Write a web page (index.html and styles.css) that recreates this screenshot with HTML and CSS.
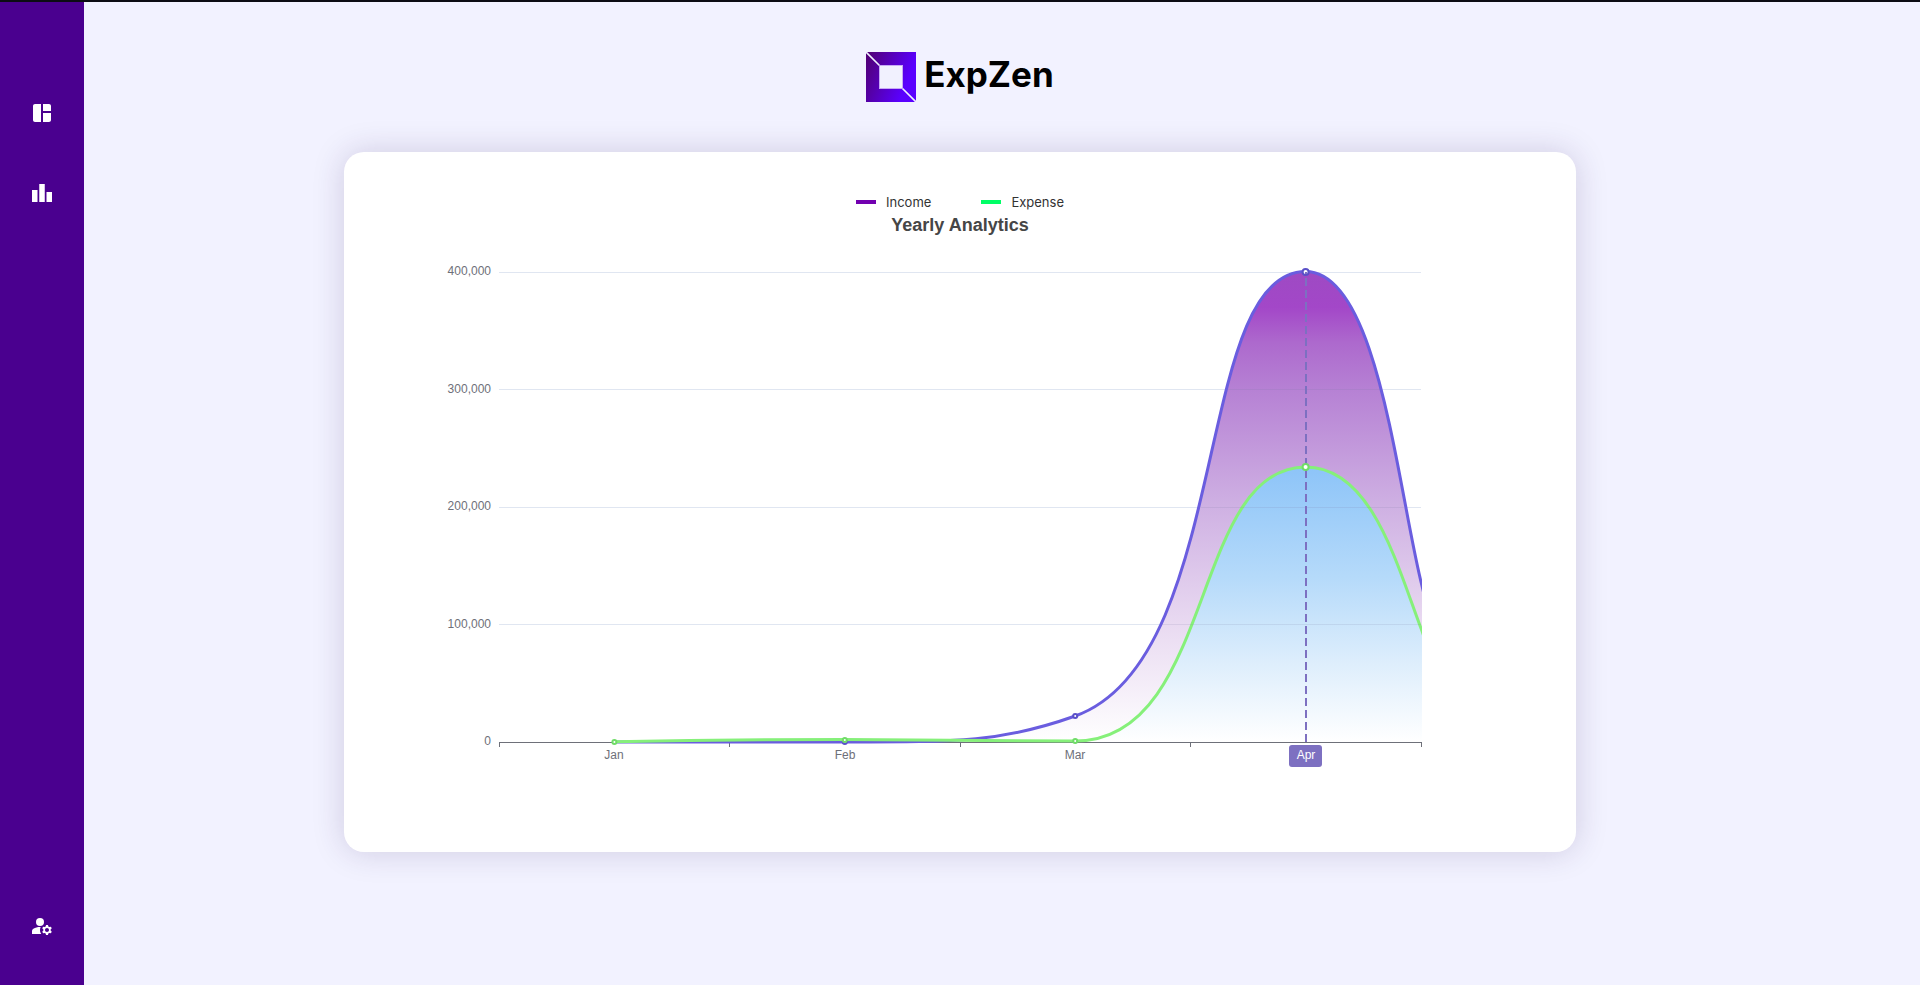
FILE: index.html
```html
<!DOCTYPE html>
<html lang="en">
<head>
<meta charset="utf-8">
<title>ExpZen</title>
<link rel="stylesheet" href="styles.css">
</head>
<body>
<div class="app">
  <nav class="sidebar" aria-label="Main">
    <div class="nav-group">
      <a class="nav-link" href="#dashboard" aria-label="Dashboard"><svg class="icon" viewBox="0 0 24 24"><path d="M11 21H5c-1.1 0-2-.9-2-2V5c0-1.1.9-2 2-2h6v18zm2 0h6c1.1 0 2-.9 2-2v-7h-8v9zm8-11V5c0-1.1-.9-2-2-2h-6v7h8z"/></svg></a>
      <a class="nav-link" href="#analytics" aria-label="Analytics"><svg class="icon" viewBox="0 0 24 24"><path d="M7.5 21H2V9h5.5v12zm7.25-18h-5.5v18h5.5V3zM22 11h-5.5v10H22V11z"/></svg></a>
    </div>
    <a class="nav-link" href="#account" aria-label="Account"><svg class="icon" viewBox="0 0 24 24"><circle cx="10" cy="8" r="4"/><path d="M10.67 13.02c-.22-.01-.44-.02-.67-.02-2.42 0-4.68.67-6.61 1.82-.88.52-1.39 1.5-1.39 2.53V20h9.26c-.79-1.13-1.26-2.51-1.26-4 0-1.07.25-2.07.67-2.98zM20.75 16c0-.22-.03-.42-.06-.63l1.14-1.01-1-1.73-1.45.49c-.32-.27-.68-.48-1.08-.63L18 11h-2l-.3 1.49c-.4.15-.76.36-1.08.63l-1.45-.49-1 1.73 1.14 1.01c-.03.21-.06.41-.06.63s.03.42.06.63l-1.14 1.01 1 1.73 1.45-.49c.32.27.68.48 1.08.63L16 21h2l.3-1.49c.4-.15.76-.36 1.08-.63l1.45.49 1-1.73-1.14-1.01c.03-.21.06-.41.06-.63zM17 18c-1.1 0-2-.9-2-2s.9-2 2-2 2 .9 2 2-.9 2-2 2z"/></svg></a>
  </nav>
  <main class="main">
    <header class="brand">
      <svg class="brand-mark" viewBox="0 0 50 50" aria-hidden="true">
        <defs><linearGradient id="mark" x1="0" y1="0.2" x2="1" y2="0.6"><stop offset="0" stop-color="#52007a"/><stop offset="0.85" stop-color="#5a00ff"/></linearGradient></defs>
        <rect width="50" height="50" fill="url(#mark)"/>
        <path d="M0 0L14 14M36 36L50 50" stroke="#f0f0fe" stroke-width="1.6"/>
        <rect x="13.5" y="13.5" width="23" height="23" fill="#f1f1fe" stroke="#c8aaf5"/>
      </svg>
      <span class="brand-name">ExpZen</span>
    </header>
    <section class="card">
      <div class="legend">
        <span class="legend-item"><i class="swatch swatch-income"></i>Income</span>
        <span class="legend-item"><i class="swatch swatch-expense"></i>Expense</span>
      </div>
      <h1 class="title">Yearly Analytics</h1>
      <svg class="chart" viewBox="384 238 1152 574" role="img" aria-label="Income and expense by month">
        <defs>
          <linearGradient id="income" gradientUnits="userSpaceOnUse" x1="0" y1="272" x2="0" y2="742">
            <stop offset="0" stop-color="#9e4ac3"/><stop offset="0.075" stop-color="#a347c8"/><stop offset="0.15" stop-color="#ad69cd"/><stop offset="0.25" stop-color="#b681d4"/><stop offset="0.5" stop-color="#cfb1e3"/><stop offset="0.75" stop-color="#e9daf1"/><stop offset="1" stop-color="#ffffff"/>
          </linearGradient>
          <linearGradient id="expense" gradientUnits="userSpaceOnUse" x1="0" y1="467" x2="0" y2="742">
            <stop offset="0" stop-color="#8dc4f8"/><stop offset="0.4" stop-color="#b5dafa"/><stop offset="0.7" stop-color="#dcedfc"/><stop offset="1" stop-color="#ffffff"/>
          </linearGradient>
          <clipPath id="plot"><rect x="498" y="260" width="924" height="490"/></clipPath>
        </defs>
        <path class="grid" d="M499 272.5H1421M499 389.5H1421M499 507.5H1421M499 624.5H1421"/>
        <path class="axis" d="M499 742.5H1422M499.5 742V747M729.5 742V747M960.5 742V747M1190.5 742V747M1421.5 742V747"/>
        <g clip-path="url(#plot)">
          <path fill="url(#income)" d="M844.8 742C960 742 1002.3 742 1075.2 716C1232.7 660 1192 271.5 1305.6 271.5C1378 271.5 1397 485.5 1422 586V742Z"/>
          <path class="line line-income" d="M614.4 742H844.8C960 742 1002.3 742 1075.2 716C1232.7 660 1192 271.5 1305.6 271.5C1378 271.5 1397 485.5 1422 586L1426 602"/>
          <path fill="url(#expense)" d="M1075.2 741C1215.4 741 1190.4 467 1305.6 467C1372 467 1397 565.5 1422 631V742H1075.2Z"/>
          <path class="line line-expense" d="M614.4 741.7C614.4 741.7 729.6 739.6 844.8 739.6C960 739.6 985 741 1075.2 741C1215.4 741 1190.4 467 1305.6 467C1372 467 1397 565.5 1422 631L1426 642"/>
        </g>
        <path class="grid grid-over" d="M1228 389.5H1380M1201 507.5H1404M1162 624.5H1421"/>
        <g class="dots dots-income"><circle cx="844.8" cy="742" r="2"/><circle cx="1075.2" cy="716" r="2"/><circle cx="1305.6" cy="272" r="3"/></g>
        <path class="pointer" d="M1306 742V272"/>
        <g class="dots dots-expense"><circle cx="614.4" cy="742" r="2"/><circle cx="844.8" cy="740" r="2"/><circle cx="1075.2" cy="741" r="2"/><circle cx="1305.6" cy="467" r="3"/></g>
        <g class="label label-y">
          <text x="491" y="275">400,000</text><text x="491" y="393">300,000</text><text x="491" y="510">200,000</text><text x="491" y="628">100,000</text><text x="491" y="745">0</text>
        </g>
        <rect x="1289" y="745" width="33" height="22" rx="3" fill="#7d70c1"/>
        <g class="label label-x">
          <text x="614" y="759">Jan</text><text x="845" y="759">Feb</text><text x="1075" y="759">Mar</text><text class="label-active" x="1306" y="759">Apr</text>
        </g>
      </svg>
    </section>
  </main>
</div>
</body>
</html>
```
FILE: styles.css
```css
* { box-sizing: border-box; }
body {
  margin: 0;
  background: #f2f2ff;
  font-family: "Liberation Sans", Arial, sans-serif;
}
.app {
  display: flex;
  min-height: 100vh;
  border-top: 2px solid #0c0c14;
}
.sidebar {
  display: flex;
  flex-direction: column;
  justify-content: space-between;
  align-items: center;
  flex: 0 0 84px;
  padding: 99px 0 47px;
  background: #4a008f;
}
.nav-group {
  display: flex;
  flex-direction: column;
  gap: 56px;
}
.nav-link { display: block; height: 24px; }
.icon { display: block; width: 24px; height: 24px; fill: #fff; }
.main {
  flex: 1;
  display: flex;
  flex-direction: column;
  align-items: center;
  padding: 50px 344px 50px 260px;
}
.brand {
  display: flex;
  align-items: center;
  gap: 8px;
  height: 50px;
  margin-bottom: 50px;
}
.brand-mark { width: 50px; height: 50px; }
.brand-name {
  font: 700 35px/44px Inter, sans-serif;
  color: #000;
  padding-bottom: 6px;
}
.card {
  width: 100%;
  padding: 40px;
  border-radius: 20px;
  background: #fff;
  box-shadow: 0 0 32px rgba(50, 30, 90, 0.18);
}
.legend {
  display: flex;
  justify-content: center;
  gap: 50px;
  height: 20px;
}
.legend-item {
  display: flex;
  align-items: center;
  gap: 10px;
  font: 400 13px/20px Inter, sans-serif;
  color: #333;
}
.swatch { width: 20px; height: 4px; }
.swatch-income { background: #7200b0; }
.swatch-expense { background: #00ff66; }
.title {
  margin: 0;
  font-size: 18px;
  line-height: 26px;
  font-weight: 700;
  text-align: center;
  color: #464646;
}
.chart { display: block; width: 100%; height: auto; }
.grid { stroke: #e0e6f1; fill: none; }
.grid-over { stroke: #7878a0; stroke-opacity: 0.15; }
.axis { stroke: #6e7079; fill: none; }
.line { fill: none; stroke-width: 3; }
.line-income { stroke: #6a5ddf; }
.line-expense { stroke: #86f07a; }
.dots { fill: #fff; stroke-width: 2; }
.dots-income { stroke: #5a50c8; }
.dots-expense { stroke: #70dc68; }
.pointer { stroke: #7d70c1; stroke-width: 2; stroke-dasharray: 8 4; }
.label { font-size: 12px; fill: #6e7079; }
.label-y { text-anchor: end; }
.label-x { text-anchor: middle; }
.label-active { fill: #fff; }
```
